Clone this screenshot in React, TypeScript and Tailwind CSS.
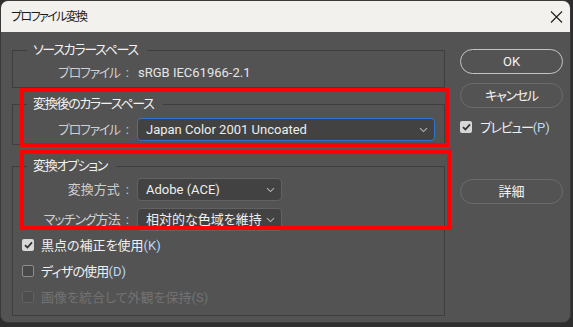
import React from 'react';

const ui = "font-['Roboto','Noto_Sans_CJK_JP',sans-serif] [font-feature-settings:'palt']";
// katakana in the reference UI font is narrower than Noto's
const kana = 'tracking-[-1.3px]';

const Chevron = () => (
    <svg width="9" height="6" viewBox="0 0 9 6" className="shrink-0">
        <path d="M1 1.2 L4.5 4.6 L8 1.2" fill="none" stroke="#b4b4b4" strokeWidth="1.1" />
    </svg>
);

const Select: React.FC<{ value: string; width: string; focused?: boolean }> = ({ value, width, focused }) => (
    <div
        className={`${width} h-[23px] flex items-center justify-between pl-[8px] pr-[6px] rounded-[4px] border bg-[#424242] text-[13px] text-[#eeeeee] ${
            focused ? 'border-[#2f74d0]' : 'border-[#626262]'
        }`}
    >
        <span className="truncate leading-none">{value}</span>
        <Chevron />
    </div>
);

const CheckBox: React.FC<{ checked?: boolean; disabled?: boolean }> = ({ checked, disabled }) => {
    if (checked) {
        return (
            <div className="w-[12px] h-[12px] rounded-[2px] bg-[#d8d8d8] flex items-center justify-center shrink-0">
                <svg width="9" height="8" viewBox="0 0 9 8">
                    <path d="M1 4.2 L3.4 6.5 L8 1.3" fill="none" stroke="#333333" strokeWidth="1.8" />
                </svg>
            </div>
        );
    }
    return (
        <div
            className={`w-[12px] h-[12px] rounded-[2px] border shrink-0 ${
                disabled ? 'border-[#606060] bg-[#4e4e4e]' : 'border-[#8e8e8e] bg-[#484848]'
            }`}
        />
    );
};

const Option: React.FC<{ label: string; key2: string; checked?: boolean; disabled?: boolean; tight?: boolean }> = ({
    label,
    key2,
    checked,
    disabled,
    tight,
}) => (
    <div className="h-[20px] flex items-center gap-[7px]">
        <CheckBox checked={checked} disabled={disabled} />
        <span className={`text-[13px] leading-none ${disabled ? 'text-[#727272]' : 'text-[#f0f0f0]'}`}>
            <span className={tight ? 'tracking-[-0.8px]' : ''}>{label}</span>
            <span className={disabled ? 'text-[#727272]' : 'text-[#bcd8f5]'}>({key2})</span>
        </span>
    </div>
);

const Group: React.FC<{ title: string; className?: string; children: React.ReactNode }> = ({
    title,
    className = '',
    children,
}) => (
    <fieldset className={`w-[433px] border border-[#3e3e3e] ${className}`}>
        <legend className={`ml-[14px] pl-[6px] pr-[9px] h-[16px] leading-[16px] text-[13px] text-[#f2f2f2] ${kana}`}>
            {title}
        </legend>
        {children}
    </fieldset>
);

const Label: React.FC<{ text: string; className?: string }> = ({ text, className = kana }) => (
    <span className="w-[116px] text-right text-[13px] text-[#cfcfcf] leading-none shrink-0">
        <span className={className}>{text}</span>
        <span className="ml-[6px]">:</span>
    </span>
);

const PillButton: React.FC<{ children: React.ReactNode; primary?: boolean; className?: string }> = ({
    children,
    primary,
    className = '',
}) => (
    <button
        className={`w-[103px] h-[25px] rounded-full flex items-center justify-center text-[13px] text-[#f4f4f4] ${
            primary ? 'border-[1.5px] border-[#c4c4c4]' : 'border-[1.5px] border-[#6c6c6c]'
        } ${className}`}
    >
        {children}
    </button>
);

export default function App() {
    return (
        <div className={`w-[573px] h-[327px] bg-[#2e2e2e] ${ui}`}>
            <div className="w-[571px] h-[323px] rounded-[8px] overflow-hidden border border-[#3a3a3a] bg-[#535353] flex flex-col">
                {/* Title bar */}
                <div className="h-[31px] shrink-0 bg-[#f3f1ee] flex items-center justify-between pl-[10px] pr-[7px]">
                    <span className="text-[12px] text-[#1b1b1b] leading-none tracking-[-1.6px]">プロファイル変換</span>
                    <svg width="13" height="12" viewBox="0 0 13 12">
                        <path d="M1 0.5 L12 11.5 M12 0.5 L1 11.5" stroke="#1f1f1f" strokeWidth="1.1" />
                    </svg>
                </div>

                {/* Body */}
                <div className="relative flex-1 flex">
                    <div className="pl-[11px] pt-[10px] w-[445px] shrink-0">
                        <Group title="ソースカラースペース" className="pt-[6px] pb-[7px]">
                            <div className="h-[16px] flex items-center">
                                <Label text="プロファイル" />
                                <span className="ml-[9px] text-[13px] text-[#e6e6e6] leading-none">sRGB IEC61966-2.1</span>
                            </div>
                        </Group>

                        <Group title="変換後のカラースペース" className="mt-[8px] pt-[6px] pb-[3px]">
                            <div className="flex items-center">
                                <Label text="プロファイル" />
                                <div className="ml-[8px]">
                                    <Select value="Japan Color 2001 Uncoated" width="w-[298px]" focused />
                                </div>
                            </div>
                        </Group>

                        <Group title="変換オプション" className="mt-[13px] pt-[4px] pb-[8px]">
                            <div className="flex flex-col gap-[7px]">
                                <div className="flex items-center">
                                    <Label text="変換方式" className="" />
                                    <div className="ml-[8px]">
                                        <Select value="Adobe (ACE)" width="w-[145px]" />
                                    </div>
                                </div>
                                <div className="flex items-center">
                                    <Label text="マッチング方法" className="tracking-[-1px]" />
                                    <div className="ml-[8px]">
                                        <Select value="相対的な色域を維持" width="w-[145px]" />
                                    </div>
                                </div>
                            </div>
                            <div className="mt-[4px] pl-[9px] flex flex-col gap-[6px]">
                                <Option label="黒点の補正を使用" key2="K" checked />
                                <Option label="ディザの使用" key2="D" tight />
                                <Option label="画像を統合して外観を保持" key2="S" disabled />
                            </div>
                        </Group>
                    </div>

                    {/* Buttons */}
                    <div className="ml-[14px] pt-[17px] flex flex-col">
                        <PillButton primary>OK</PillButton>
                        <PillButton className={`mt-[9px] ${kana}`}>キャンセル</PillButton>
                        <div className="mt-[11px] h-[16px] flex items-center gap-[8px]">
                            <CheckBox checked />
                            <span className="text-[13px] text-[#f0f0f0] leading-none">
                                <span className={kana}>プレビュー</span>
                                <span className="text-[#bcd8f5]">(P)</span>
                            </span>
                        </div>
                        <PillButton className="mt-[44px]">詳細</PillButton>
                    </div>

                    {/* Red annotation boxes */}
                    <div className="absolute left-[19px] top-[56px] w-[429px] h-[59px] border-[4px] border-[#ff0000] pointer-events-none" />
                    <div className="absolute left-[19px] top-[118px] w-[431px] h-[80px] border-[4px] border-[#ff0000] pointer-events-none" />
                </div>
            </div>
        </div>
    );
}
